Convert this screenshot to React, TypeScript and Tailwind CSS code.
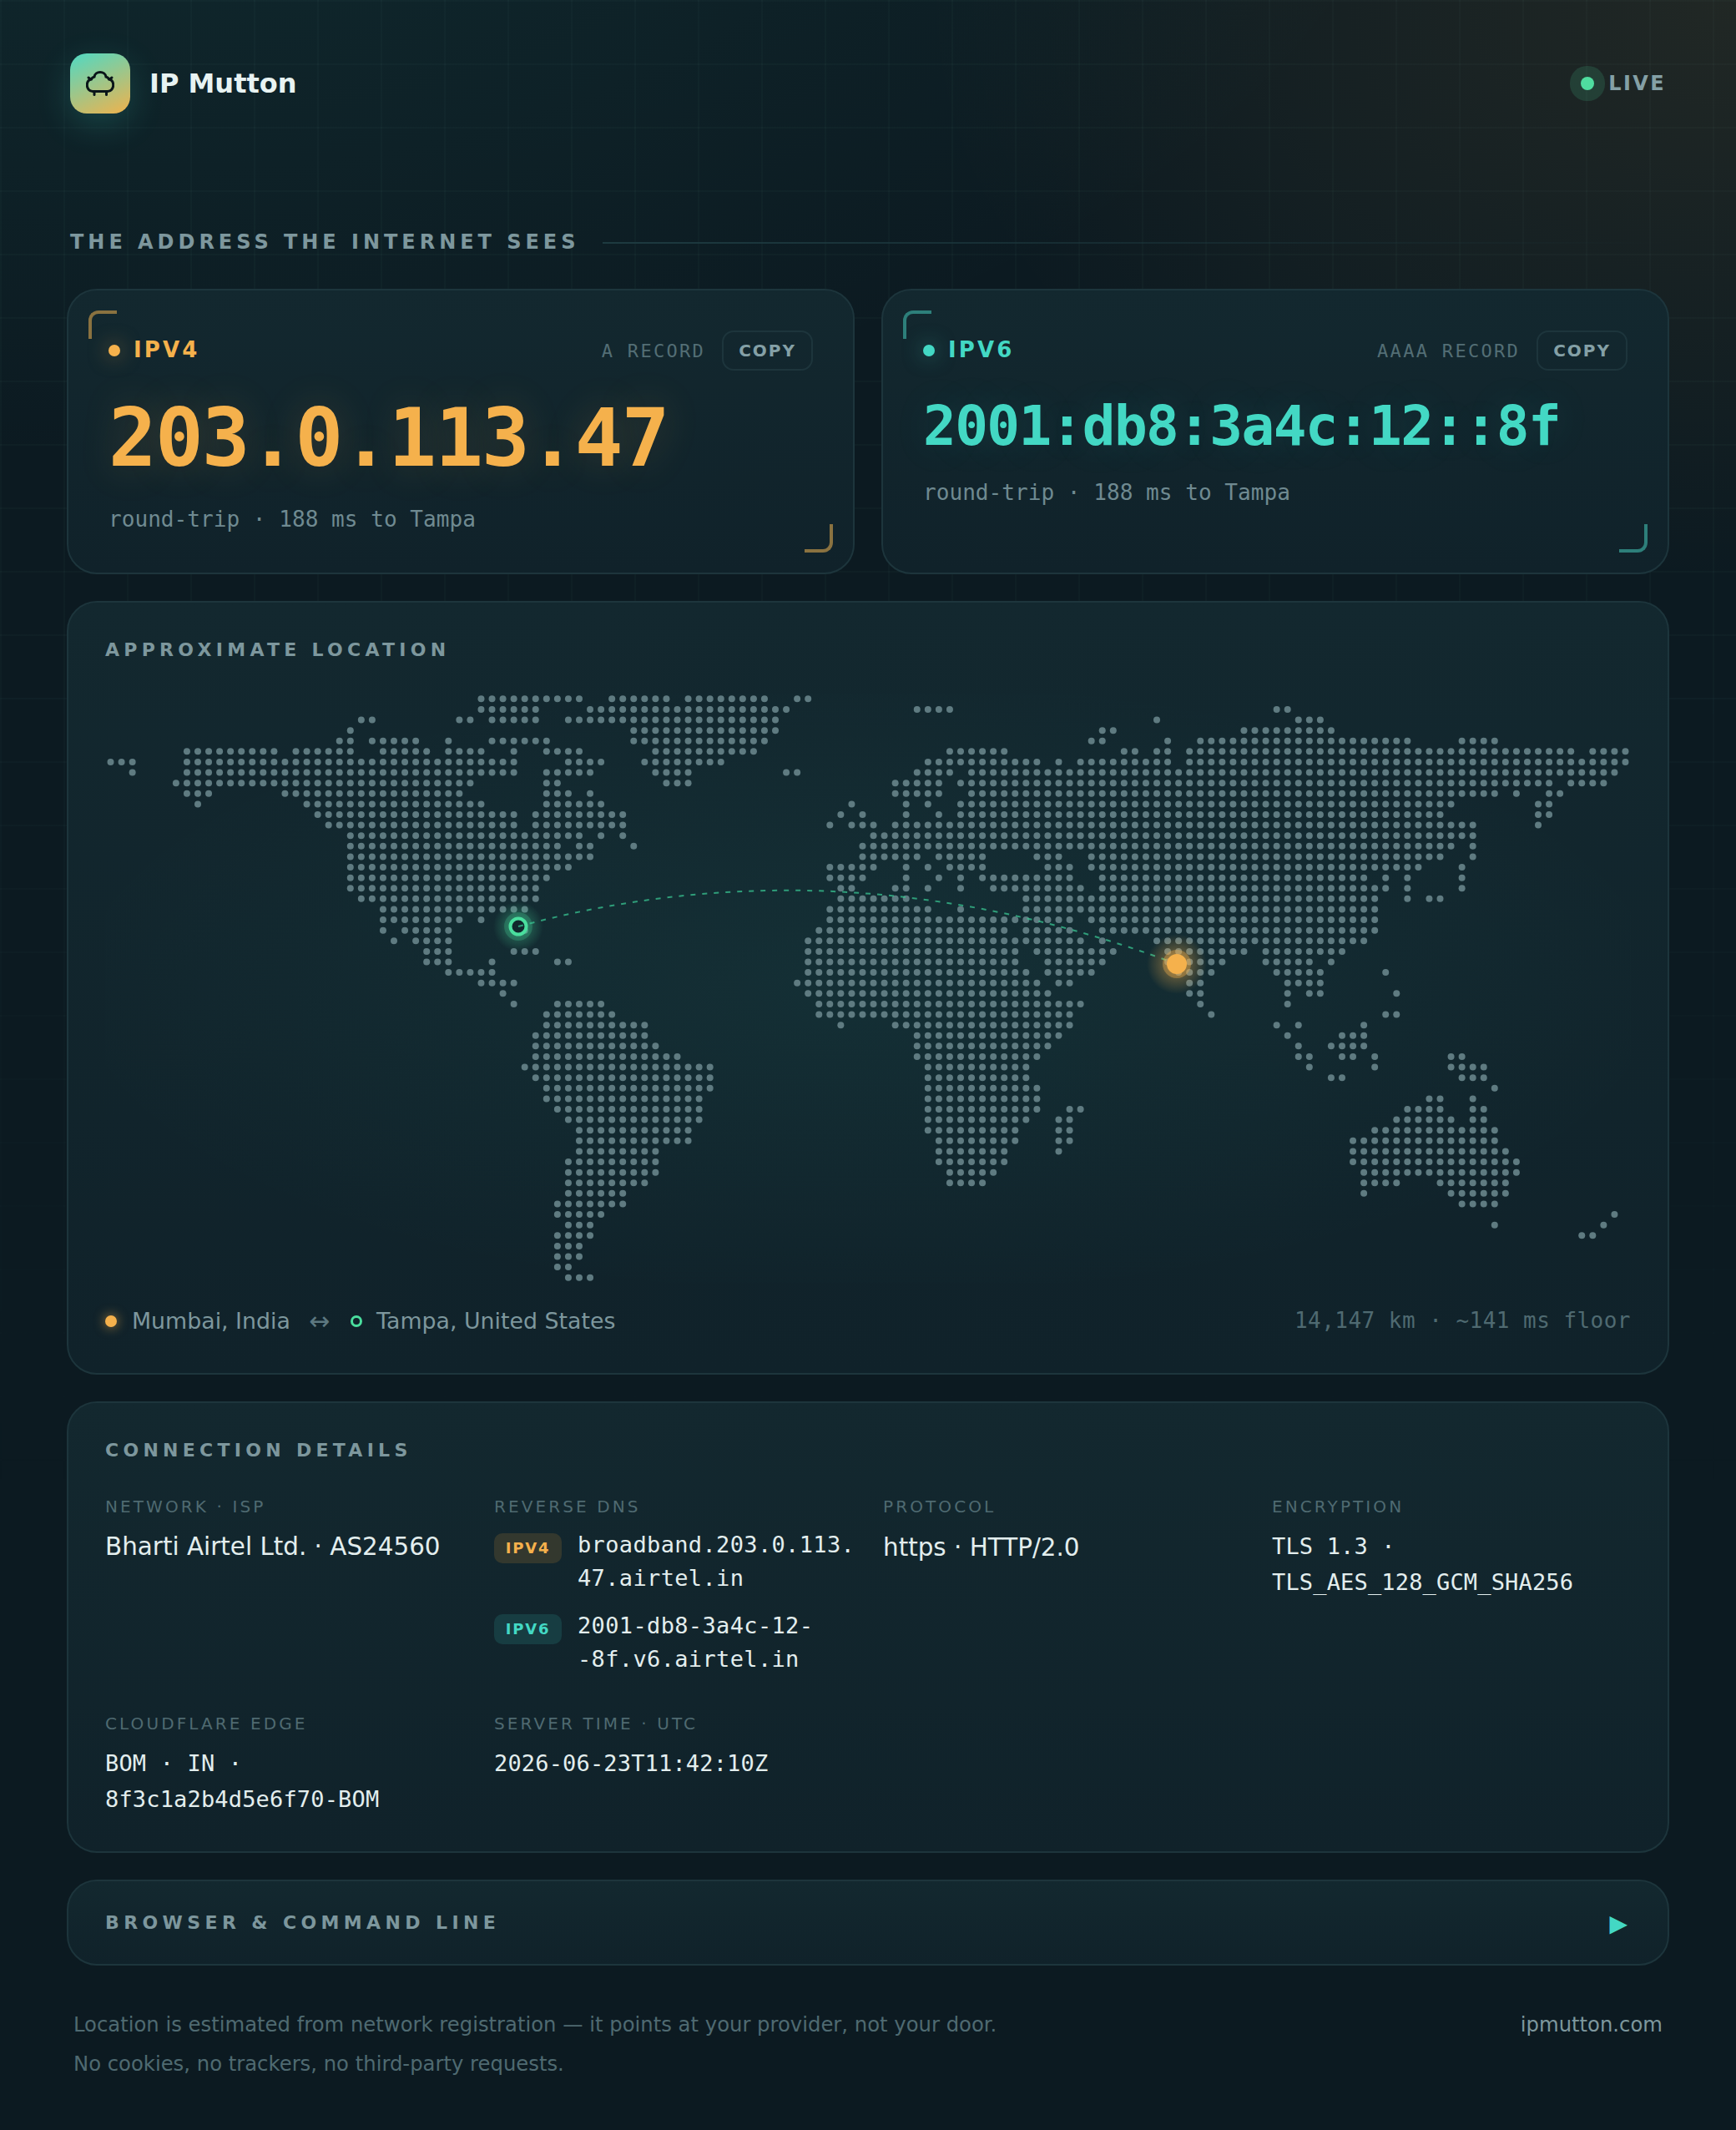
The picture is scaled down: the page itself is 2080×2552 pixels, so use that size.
import React from 'react';

// dot map: one string of column runs per row, 140 columns x 56 rows
const MAP_ROWS = [
  '34-43,46-51,53-60,63-64',
  '34-39,44-62,74-77,107-108',
  '23-24,32-33,35-39,42-61,96,109-111',
  '22,48-61,91-92,104-112',
  '21-22,24-28,31,35-40,48-60,90-91,97,100-119,124-127',
  '7-15,17-22,25-29,31-34,37,40-43,50-59,77-82,93-94,96-97,99-134,136-139',
  '0-2,7-37,42-45,49-56,75-85,87,89-97,99-139',
  '2,7-37,40-44,50-53,62-63,74-77,79-138',
  '6-33,40-41,51-53,72-76,78-132,134-137',
  '7-9,16-32,40-42,44,72-76,79-127,129,132-133',
  '8,18-34,40-45,68,73,75,78-123,131-132',
  '19-37,39-47,67,69,73,76,78-122,131-132',
  '20-37,39-47,66,68-70,72-125,131',
  '22-43,45,47,70-125',
  '22-41,43-44,48,69-123,125',
  '22-44,69-74,76-80,85-87,90-122,125',
  '22-42,66-70,73,75,77-80,86-88,90-120,124',
  '22-40,66-69,73,76,78,80-88,91-115,117,119,124',
  '22-39,67-68,72-73,75,78,81-89,91-117,119,124',
  '23-39,67-73,84-116,119,121-122',
  '25-38,66-75,78,84-116',
  '25-32,34,66-88,90-116',
  '25,27-31,38,65-82,84-88,91-116',
  '26,28-31,64-89,91,96-115',
  '29-31,37-39,64-83,85-92,97-104,106-113',
  '29-31,35,41-42,64-83,86-91,97-102,106-110,112',
  '31-35,64-84,86-90,98-101,107-111,117',
  '34-37,63-85,87-88,99-100,108-111',
  '36,64-86,99-100,108,110-111,118',
  '37,41-45,65-89,100,108',
  '40-46,65-88,101,117-118',
  '40-49,67,72-88,107,109,115',
  '39-49,74-87,108,113-115',
  '39-50,74-86,109,112-115',
  '39-52,74-85,109-110,113-114,116,123-124',
  '38-55,75-84,110,116,123-126',
  '39-55,75-84,112-113,124-126',
  '40-55,75-85,127',
  '40-54,75-85,121-122,125',
  '41-54,75-85,88-89,119-122,125-126',
  '42-54,75-84,87-88,118-123,125-126',
  '43-53,75-83,87-88,116-127',
  '43-53,76-83,87-88,114-127',
  '43-50,76-82,87,114-128',
  '42-50,76-82,114-129',
  '42-50,77-81,115-129',
  '42-49,77-80,115-118,122-128',
  '42-47,115,123-128',
  '41-47,124-127',
  '41-45,138',
  '42-44,127,137',
  '41-44,135-136',
  '41-43',
  '41-43',
  '41-42',
  '42-44',
];

const MAP_W = 1828;
const MAP_H = 706;
const CELL_W = MAP_W / 140;
const CELL_H = MAP_H / 56;

const dots: { x: number; y: number }[] = [];
MAP_ROWS.forEach((row, r) => {
  row.split(',').forEach((run) => {
    const [a, b] = run.split('-').map(Number);
    for (let c = a; c <= (b ?? a); c++) {
      dots.push({ x: (c + 0.5) * CELL_W, y: (r + 0.5) * CELL_H });
    }
  });
});

const mono = "font-['DejaVu_Sans_Mono',monospace]";

const WorldMap = () => (
  <div className="mt-[40px] h-[706px] bg-[radial-gradient(ellipse_at_center,rgba(64,216,196,0.06),transparent_76%)]">
    <svg width={MAP_W} height={MAP_H} viewBox={`0 0 ${MAP_W} ${MAP_H}`} className="block">
      <defs>
        <radialGradient id="glowAmber">
          <stop offset="0.35" stopColor="#f5b14c" stopOpacity="0.35" />
          <stop offset="1" stopColor="#f5b14c" stopOpacity="0" />
        </radialGradient>
        <radialGradient id="glowGreen">
          <stop offset="0.35" stopColor="#4ade9e" stopOpacity="0.3" />
          <stop offset="1" stopColor="#4ade9e" stopOpacity="0" />
        </radialGradient>
      </defs>
      {dots.map((d, i) => (
        <circle key={i} cx={d.x} cy={d.y} r={4} fill="#5f7b81" />
      ))}
      {/* Tampa sits under the arc, Mumbai over it */}
      <circle cx={495} cy={279} r={30} fill="url(#glowGreen)" />
      <circle cx={495} cy={279} r={17} fill="#4ade9e" fillOpacity={0.22} />
      <circle cx={495} cy={279} r={9.5} fill="#0f2229" fillOpacity={0.95} stroke="#4ade9e" strokeWidth={4} />
      <path
        d="M495 279 Q884 174 1284 324"
        fill="none"
        stroke="#38c492"
        strokeOpacity={0.75}
        strokeWidth={2}
        strokeDasharray="6 8"
      />
      <circle cx={1284} cy={324} r={36} fill="url(#glowAmber)" />
      <circle cx={1284} cy={324} r={17} fill="#f5b14c" fillOpacity={0.35} />
      <circle cx={1284} cy={324} r={12} fill="#f5b14c" />
    </svg>
  </div>
);

const SheepIcon = () => (
  <svg width="34" height="30" viewBox="0 0 34 30" fill="none" stroke="#0a1519" strokeWidth="3" strokeLinecap="round">
    <path d="M10 7C10.5 3.5 13.5 1.5 17 1.5S23.5 3.5 24 7C25.5 7.5 27 8.5 27.5 10 31 10.5 32.7 13.5 32.7 17 32.7 21 30 24.5 26 24.5H8C4 24.5 1.3 21 1.3 17 1.3 13.5 3 10.5 6.5 10 7 8.5 8.5 7.5 10 7Z" />
    <path d="M10 25V28.5M24.5 25V28.5" />
    <path d="M3 8 5.5 10M31 8 28.5 10" />
  </svg>
);

const AddressCard = ({
  kind,
  record,
  value,
  amber,
}: {
  kind: string;
  record: string;
  value: string;
  amber?: boolean;
}) => (
  <div className="relative rounded-[36px] border-2 border-[#1d353c] bg-[linear-gradient(180deg,#13282f,#10222a)] px-[48px] pt-[48px] pb-[48px]">
    <span
      className={`absolute top-[24px] left-[24px] size-[34px] rounded-tl-[12px] border-t-4 border-l-4 ${amber ? 'border-[#8a7240]' : 'border-[#2d7f7a]'}`}
    />
    <span
      className={`absolute right-[24px] bottom-[24px] size-[34px] rounded-br-[12px] border-r-4 border-b-4 ${amber ? 'border-[#8a7240]' : 'border-[#2d7f7a]'}`}
    />
    <div className="flex items-center justify-between">
      <div className="flex items-center gap-[16px]">
        <span
          className={`size-[14px] rounded-full ${amber ? 'bg-[#f5b14c] shadow-[0_0_24px_rgba(245,177,76,0.5)]' : 'bg-[#43d8c4] shadow-[0_0_24px_rgba(67,216,196,0.5)]'}`}
        />
        <span className={`-mt-[2px] text-[26px] leading-[30px] font-bold tracking-[0.12em] ${amber ? 'text-[#f5b14c]' : 'text-[#43d8c4]'}`}>
          {kind}
        </span>
      </div>
      <div className="flex items-center gap-[20px]">
        <span className={`${mono} text-[22px] tracking-[0.105em] text-[#536e75]`}>{record}</span>
        <button className="rounded-[14px] border-2 border-[#1d353c] px-[18px] py-[8px] text-[20px] leading-[28px] font-bold tracking-[0.1em] text-[#84a0a6]">
          COPY
        </button>
      </div>
    </div>
    <div
      className={`${mono} leading-[1.1] font-bold ${amber ? 'mt-[29px] text-[96px] tracking-[-0.02em] text-[#f5b14c] [text-shadow:0_0_48px_rgba(245,177,76,0.18)]' : 'mt-[31px] text-[66px] tracking-[-0.024em] text-[#43d8c4] [text-shadow:0_0_48px_rgba(67,216,196,0.14)]'}`}
    >
      {value}
    </div>
    <div className={`${mono} text-[26.1px] leading-[31px] text-[#6f8a91] ${amber ? 'mt-[28px]' : 'mt-[27.5px]'}`}>
      round-trip · 188 ms to Tampa
    </div>
  </div>
);

const Label = ({ children }: { children: React.ReactNode }) => (
  <div className="text-[20px] leading-[24px] tracking-[0.155em] text-[#4f6a71]">{children}</div>
);

const DnsRow = ({ kind, host, amber }: { kind: string; host: string; amber?: boolean }) => (
  <div className="flex items-start gap-[19px]">
    <span
      className={`mt-[6px] flex h-[36px] w-[81px] shrink-0 items-center justify-center rounded-[10px] text-[18px] font-bold tracking-[0.1em] ${amber ? 'bg-[#33382e] text-[#f5b14c]' : 'bg-[#173d42] text-[#43d8c4]'}`}
    >
      {kind}
    </span>
    <span className={`${mono} -mr-[8px] min-w-0 text-[27px] leading-[40.5px] tracking-[0.013em] text-[#e3eeee] [overflow-wrap:anywhere]`}>
      {host}
    </span>
  </div>
);

const sectionTitle = 'text-[22px] leading-[25px] font-bold tracking-[0.24em] text-[#7d979d]';
const panel = 'rounded-[36px] border-2 border-[#1d353c] bg-[linear-gradient(180deg,#13282f,#10222a)]';
const monoValue = `${mono} mt-[14px] text-[27px] leading-[43px] tracking-[0.006em] text-[#e3eeee]`;

export default function App() {
  return (
    <div className="relative min-h-screen overflow-hidden bg-[#0c1a21] bg-[radial-gradient(2100px_1150px_at_8%_-12%,rgba(64,216,196,0.09),transparent_75%),radial-gradient(1400px_1000px_at_100%_0%,rgba(245,177,76,0.09),transparent_70%)] font-['DejaVu_Sans',sans-serif]">
      <div className="pointer-events-none absolute inset-0 bg-[linear-gradient(rgba(130,200,190,0.03)_2px,transparent_2px),linear-gradient(90deg,rgba(130,200,190,0.03)_2px,transparent_2px)] bg-size-[76px_76px] [mask-image:linear-gradient(180deg,black_30%,transparent_72%)]" />

      <div className="relative px-[80px] pt-[64px]">
        <header className="flex h-[72px] items-center justify-between px-[4px]">
          <div className="flex items-center gap-[23px]">
            <div className="flex size-[72px] items-center justify-center rounded-[20px] bg-[linear-gradient(155deg,#4fd9c4,#f0b24c)] shadow-[0_12px_40px_rgba(64,216,196,0.2)]">
              <SheepIcon />
            </div>
            <span className="text-[32px] font-bold text-[#e8f3f2]">IP Mutton</span>
          </div>
          <div className="flex items-center gap-[17px]">
            <span className="size-[16px] rounded-full bg-[#4fdd9f] shadow-[0_0_0_13px_rgba(79,221,159,0.15)]" />
            <span className="text-[24px] font-bold tracking-[0.1em] text-[#84a0a6]">LIVE</span>
          </div>
        </header>

        <div className="mt-[140px] flex items-center gap-[28px] pl-[4px]">
          <h2 className="text-[24px] leading-[28px] font-bold tracking-[0.207em] whitespace-nowrap text-[#7d979d]">
            THE ADDRESS THE INTERNET SEES
          </h2>
          <div className="mt-[2px] h-[2px] flex-1 bg-[linear-gradient(90deg,#1d3a40,transparent)]" />
        </div>

        <div className="mt-[42px] grid grid-cols-2 gap-[32px]">
          <AddressCard kind="IPV4" record="A RECORD" value="203.0.113.47" amber />
          <AddressCard kind="IPV6" record="AAAA RECORD" value="2001:db8:3a4c:12::8f" />
        </div>

        <section className={`${panel} mt-[32px] px-[44px] pt-[44px] pb-[43px]`}>
          <h3 className={sectionTitle}>APPROXIMATE LOCATION</h3>
          <WorldMap />
          <div className="mt-[27px] flex h-[38px] items-center justify-between text-[26.8px] text-[#7d979d]">
            <div className="flex items-center">
              <span className="size-[14px] rounded-full bg-[#f5b14c] shadow-[0_0_14px_rgba(245,177,76,0.7)]" />
              <span className="ml-[18px]">Mumbai, India</span>
              <span className="ml-[22px] text-[30px] leading-none text-[#5d7880]">↔</span>
              <span className="ml-[25px] size-[14px] rounded-full border-[3px] border-[#4ade9e]" />
              <span className="ml-[17px]">Tampa, United States</span>
            </div>
            <span className={`${mono} text-[26px] tracking-[0.018em] text-[#4f6a71]`}>14,147 km · ~141 ms floor</span>
          </div>
        </section>

        <section className={`${panel} mt-[32px] px-[44px] pt-[44px] pb-[41px]`}>
          <h3 className={sectionTitle}>CONNECTION DETAILS</h3>
          <div className="mt-[43px] grid grid-cols-4 gap-x-[36px] gap-y-[44px]">
            <div>
              <Label>NETWORK · ISP</Label>
              <div className="mt-[15px] text-[29.4px] leading-[43px] text-[#e3eeee]">Bharti Airtel Ltd. · AS24560</div>
            </div>
            <div>
              <Label>REVERSE DNS</Label>
              <div className="mt-[14px] flex flex-col gap-[16px]">
                <DnsRow kind="IPV4" host="broadband.203.0.113.47.airtel.in" amber />
                <DnsRow kind="IPV6" host="2001-db8-3a4c-12--8f.v6.airtel.in" />
              </div>
            </div>
            <div>
              <Label>PROTOCOL</Label>
              <div className="mt-[16px] text-[29.4px] leading-[43px] text-[#e3eeee]">https · HTTP/2.0</div>
            </div>
            <div>
              <Label>ENCRYPTION</Label>
              <div className={monoValue}>TLS 1.3 · TLS_AES_128_GCM_SHA256</div>
            </div>
            <div>
              <Label>CLOUDFLARE EDGE</Label>
              <div className={monoValue}>BOM · IN · 8f3c1a2b4d5e6f70-BOM</div>
            </div>
            <div>
              <Label>SERVER TIME · UTC</Label>
              <div className={monoValue}>2026-06-23T11:42:10Z</div>
            </div>
          </div>
        </section>

        <section className={`${panel} mt-[32px] flex h-[103px] items-center justify-between px-[44px]`}>
          <h3 className="text-[22px] leading-[25px] font-bold tracking-[0.245em] text-[#7d979d]">BROWSER &amp; COMMAND LINE</h3>
          <span className="mt-[4px] mr-[4px] text-[28px] leading-none text-[#43d8c4]">▶</span>
        </section>

        <footer className="mt-[47px] flex items-start justify-between px-[8px] text-[24.3px] leading-[47.5px] text-[#4f6a71]">
          <div>
            <p>Location is estimated from network registration — it points at your provider, not your door.</p>
            <p>No cookies, no trackers, no third-party requests.</p>
          </div>
          <a className="text-[#7d979d]">ipmutton.com</a>
        </footer>
      </div>
    </div>
  );
}
